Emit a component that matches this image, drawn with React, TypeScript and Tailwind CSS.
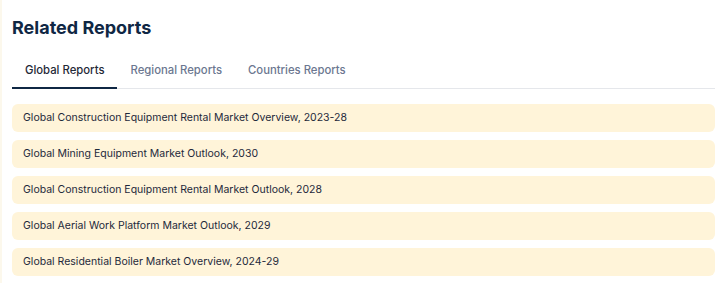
const tabs = ['Global Reports', 'Regional Reports', 'Countries Reports']

const reports = [
  'Global Construction Equipment Rental Market Overview, 2023-28',
  'Global Mining Equipment Market Outlook, 2030',
  'Global Construction Equipment Rental Market Outlook, 2028',
  'Global Aerial Work Platform Market Outlook, 2029',
  'Global Residential Boiler Market Overview, 2024-29',
]

export default function App() {
  return (
    <div className="w-[724px] h-[283px] bg-white border-l-2 border-[#fcf8ec] font-['Inter',sans-serif]">
      <div className="pl-[10px] pr-[9px] pt-[16px]">
        <h2 className="text-[18px] leading-[24px] font-bold text-[#0f2744]">Related Reports</h2>

        {/* Tabs */}
        <div className="mt-[13px] flex border-b border-[#e5e7eb]">
          {tabs.map((t, i) => (
            <button
              key={t}
              className={`-mb-px px-[13px] py-[9px] text-[11.3px] leading-[16px] font-medium border-b-2 ${
                i === 0 ? 'border-[#0f2744] text-[#1f2937]' : 'border-transparent text-[#6b7790]'
              }`}
            >
              {t}
            </button>
          ))}
        </div>

        {/* Report list */}
        <div className="mt-[15px] flex flex-col gap-2">
          {reports.map((r) => (
            <div
              key={r}
              className="h-[28px] flex items-center px-[11px] rounded-md bg-[#fff4d9] text-[10.5px] text-[#1e293b]"
            >
              {r}
            </div>
          ))}
        </div>
      </div>
    </div>
  )
}
